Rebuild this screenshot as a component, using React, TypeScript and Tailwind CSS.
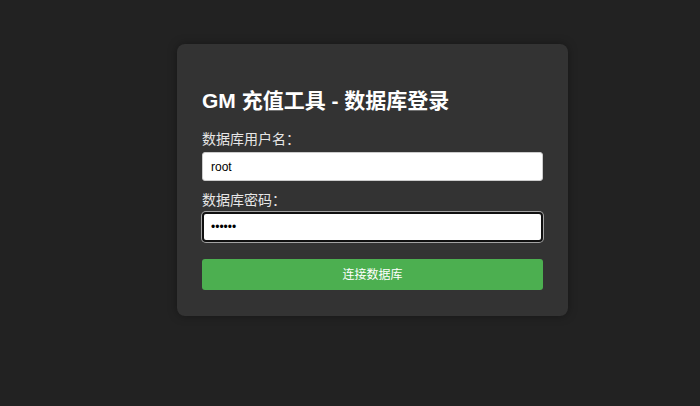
import React from 'react';

export default function App() {
  return (
    <div
      className="min-h-[406px] w-full bg-[#222222] pl-[177px] pt-[44px] text-white"
      style={{ fontFamily: '"Liberation Sans", "Noto Sans CJK SC", sans-serif' }}
    >
      <div className="w-[391px] rounded-[8px] bg-[#333333] px-[25px] pt-[25px] pb-[26px] shadow-[0_0_10px_rgba(0,0,0,0.35)]">
        <h2 className="mt-[17px] text-[21px] font-bold leading-[30px] text-white">
          GM 充值工具 - 数据库登录
        </h2>

        <label className="mt-[13px] mb-[3px] block text-[14px] leading-[20px] text-[#e6e6e6]">
          数据库用户名：
        </label>
        <input
          type="text"
          defaultValue="root"
          className="block h-[29px] w-full rounded-[3px] border border-[#cccccc] bg-white px-[8px] text-[12px] text-black outline-none"
        />

        <label className="mt-[9px] mb-[2px] block text-[14px] leading-[20px] text-[#e6e6e6]">
          数据库密码：
        </label>
        <input
          type="password"
          defaultValue="123456"
          className="block h-[30px] w-full rounded-[4px] border-2 border-[#101010] bg-white px-[7px] text-[12px] text-black shadow-[0_0_0_1px_rgba(255,255,255,0.55)] outline-none"
        />

        <button
          type="button"
          className="mt-[17px] block h-[31px] w-full rounded-[3px] bg-[#4caf50] text-[12px] text-white"
        >
          连接数据库
        </button>
      </div>
    </div>
  );
}
